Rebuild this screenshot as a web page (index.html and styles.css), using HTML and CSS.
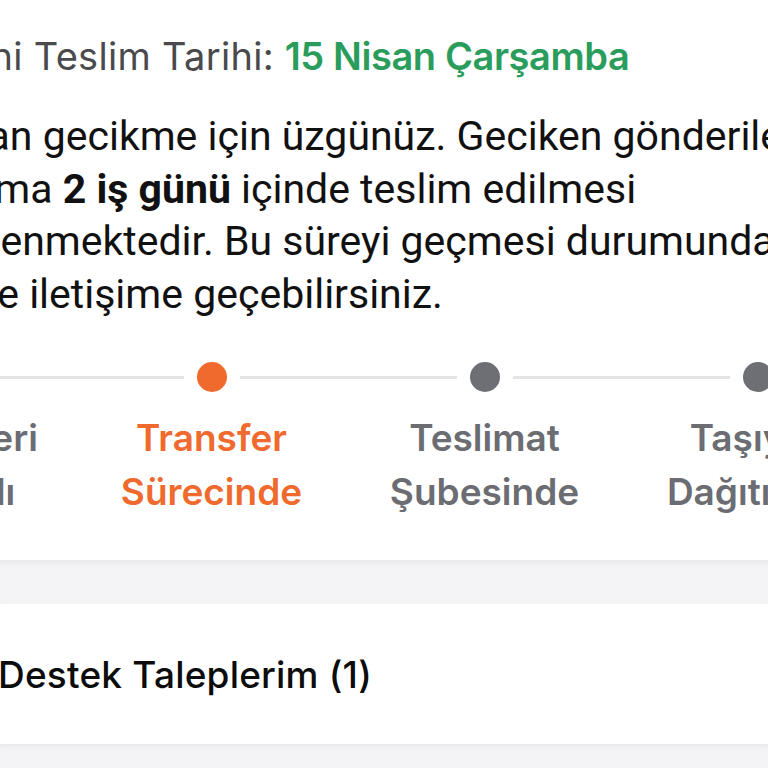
FILE: index.html
```html
<!DOCTYPE html>
<html lang="tr">
<head>
<meta charset="utf-8">
<link rel="stylesheet" href="styles.css">
</head>
<body>
<div class="screen">
  <section class="shipment">
    <div class="info">
      <p class="eta"><span class="eta-label">Tahmini Teslim Tarihi:</span> <span class="eta-value">15 Nisan Çarşamba</span></p>
      <p class="notice">Yaşanan gecikme için üzgünüz. Geciken gönderilerin<br>ortalama <b>2 iş günü</b> içinde teslim edilmesi<br>hedeflenmektedir. Bu süreyi geçmesi durumunda<br>bizimle iletişime geçebilirsiniz.</p>
    </div>
    <div class="stepper">
      <div class="step done">
        <div class="track"><span class="line"></span><span class="dot"></span><span class="line"></span></div>
        <div class="label">Gönderileri<br>Toplandı</div>
      </div>
      <div class="step active">
        <div class="track"><span class="line"></span><span class="dot"></span><span class="line"></span></div>
        <div class="label">Transfer<br>Sürecinde</div>
      </div>
      <div class="step">
        <div class="track"><span class="line"></span><span class="dot"></span><span class="line"></span></div>
        <div class="label">Teslimat<br>Şubesinde</div>
      </div>
      <div class="step">
        <div class="track"><span class="line"></span><span class="dot"></span><span class="line"></span></div>
        <div class="label">Taşıyıcı<br>Dağıtımda</div>
      </div>
    </div>
  </section>
  <div class="gap"></div>
  <section class="card">
    <div class="card-title">Destek Taleplerim (1)</div>
  </section>
  <div class="gap"></div>
</div>
</body>
</html>
```

FILE: styles.css
```css
html, body {
  margin: 0;
  padding: 0;
  background: #ffffff;
}
body {
  font-family: Inter, "Noto Sans", sans-serif;
  width: 768px;
  height: 768px;
  overflow: hidden;
}
.screen {
  width: 768px;
  height: 768px;
  overflow: hidden;
  background: #f4f4f6;
}
.shipment {
  background: #ffffff;
  padding-bottom: 41px;
  border-bottom: 1px solid #ececee;
}
.info {
  padding-top: 32px;
  white-space: nowrap;
}
.eta {
  margin: 0 0 0 -119px;
  font-size: 38px;
  line-height: 48px;
}
.eta-label {
  color: #4a4a4c;
  letter-spacing: 0.3px;
}
.eta-value {
  color: #2a9d5c;
  font-weight: 600;
  letter-spacing: -0.4px;
}
.notice {
  margin: 30px 0 0 -112px;
  text-indent: -12px;
  font-family: Roboto, Inter, sans-serif;
  font-size: 41px;
  line-height: 52.5px;
  color: #111111;
}
.notice b {
  font-weight: 700;
}
.stepper {
  display: flex;
  margin-left: -198px;
  margin-top: 42px;
}
.step {
  flex: 0 0 273px;
  display: flex;
  flex-direction: column;
  align-items: stretch;
}
.track {
  display: flex;
  align-items: center;
  height: 30px;
}
.line {
  flex: 1;
  height: 3px;
  background: #e4e4e6;
}
.dot {
  width: 30px;
  height: 30px;
  border-radius: 50%;
  background: #6d6f74;
  margin: 0 13px;
}
.step.active .dot {
  background: #f06a2e;
}
.label {
  margin-top: 19px;
  text-align: center;
  font-size: 37px;
  line-height: 54px;
  font-weight: 600;
  color: #6b6d72;
  white-space: nowrap;
}
.step.active .label {
  color: #f06a2e;
}
.gap {
  height: 43px;
  background: #f4f4f6;
  box-shadow: inset 0 6px 6px -4px rgba(0, 0, 0, 0.06);
}
.card {
  background: #ffffff;
  height: 140px;
  display: flex;
  align-items: center;
  margin-left: -2px;
}
.card-title {
  font-size: 37px;
  font-weight: 500;
  color: #0c0c0c;
  letter-spacing: 0.2px;
}
```
